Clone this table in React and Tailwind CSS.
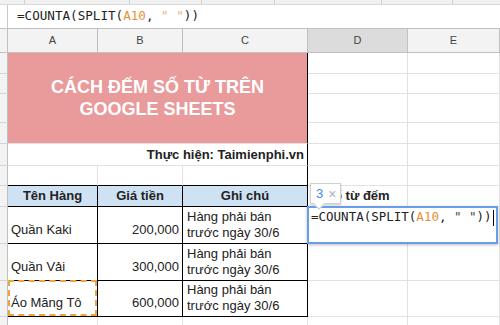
import React from 'react';

const mono = { fontFamily: '"DejaVu Sans Mono", "Liberation Mono", monospace' };

const grid = 'border-r border-b border-[#e2e2e2]';
const rowHead = 'bg-[#f3f3f3] border-r border-b border-r-[#c0c0c0] border-b-[#d4d4d4]';

const Formula = ({ quote = 'text-[#e9b27a]' }) => (
    <>
        =COUNTA(SPLIT(<span className="text-[#e69138]">A10</span>, <span className={quote}>" "</span>))
    </>
);

const ColHead = ({ label, active }) => (
    <div
        className={`flex items-center justify-center border-r border-b border-[#c0c0c0] text-[11px] text-[#444] ${
            active ? 'bg-[#dcdcdc]' : 'bg-[#f3f3f3]'
        }`}
    >
        {label}
    </div>
);

const DataRow = ({ name, price, dashed }) => (
    <>
        <div className={rowHead} />
        <div className="relative flex items-end px-[3px] pb-[4px] border-r border-b border-black">
            {name}
            {dashed && (
                <div className="absolute inset-0 -top-px border-2 border-dashed border-[#f1a43c]" />
            )}
        </div>
        <div className="flex items-end justify-end px-[3px] pb-[4px] border-r border-b border-black">
            {price}
        </div>
        <div className="flex flex-col justify-end px-[4px] pb-[2px] leading-[16px] border-r border-b border-black">
            <span>Hàng phải bán</span>
            <span>trước ngày 30/6</span>
        </div>
        <div className={grid} />
        <div className={grid} />
    </>
);

const App = () => {
    return (
        <div
            className="relative w-[500px] h-[325px] overflow-hidden bg-white text-[13px] text-[#222]"
            style={{ fontFamily: '"Liberation Sans", Arial, sans-serif' }}
        >
            {/* Toolbar remnant */}
            <div className="flex h-[5px] bg-[#f1f1f1] border-b border-[#dadada]">
                <div className="w-[25px] border-r border-[#d0d0d0]" />
                <div className="w-[105px] border-r border-[#d0d0d0]" />
                <div className="w-[72px] border-r border-[#d0d0d0]" />
                <div className="w-[73px] border-r border-[#d0d0d0]" />
                <div className="w-[107px] border-r border-[#d0d0d0]" />
                <div className="w-[71px] border-r border-[#d0d0d0]" />
            </div>

            {/* Formula bar */}
            <div className="flex h-[24px] border-b border-[#c0c0c0]">
                <div className="w-[8px] border-r border-[#c8c8c8]" />
                <div className="flex items-center pl-[9px] text-[12.6px] text-[#222]" style={mono}>
                    <span className="whitespace-pre">
                        <Formula />
                    </span>
                </div>
            </div>

            {/* Sheet grid */}
            <div className="grid grid-cols-[8px_90px_85px_125px_100px_92px] grid-rows-[24px_21px_20px_29px_21px_22px_20px_21px_37px_37px_36px_20px]">
                {/* Column headers */}
                <div className="bg-[#f3f3f3] border-r border-b border-[#c0c0c0]" />
                <ColHead label="A" />
                <ColHead label="B" />
                <ColHead label="C" />
                <ColHead label="D" active />
                <ColHead label="E" />

                {/* Title rows */}
                <div className={rowHead} />
                <div className="col-span-3 row-span-4 flex items-center justify-center bg-[#e99a9b] border-r border-b border-r-black border-b-[#e2e2e2] text-center text-[18px] leading-[22px] font-bold text-white">
                    CÁCH ĐẾM SỐ TỪ TRÊN
                    <br />
                    GOOGLE SHEETS
                </div>
                <div className={grid} />
                <div className={grid} />

                <div className={rowHead} />
                <div className={grid} />
                <div className={grid} />

                <div className={rowHead} />
                <div className={grid} />
                <div className={grid} />

                <div className={rowHead} />
                <div className={grid} />
                <div className={grid} />

                {/* Author row */}
                <div className={rowHead} />
                <div className="col-span-3 flex items-center justify-end pr-[3px] font-bold border-r border-b border-r-black border-b-[#e2e2e2]">
                    Thực hiện: Taimienphi.vn
                </div>
                <div className={grid} />
                <div className={grid} />

                {/* Empty row */}
                <div className={rowHead} />
                <div className="border-r border-b border-r-[#e2e2e2] border-b-black" />
                <div className="border-r border-b border-r-[#e2e2e2] border-b-black" />
                <div className="border-r border-b border-black" />
                <div className={grid} />
                <div className={grid} />

                {/* Table header */}
                <div className={rowHead} />
                <div className="flex items-center justify-center bg-[#cfe2f3] font-bold border-r border-b border-black">
                    Tên Hàng
                </div>
                <div className="flex items-center justify-center bg-[#cfe2f3] font-bold border-r border-b border-black">
                    Giá tiền
                </div>
                <div className="flex items-center justify-center bg-[#cfe2f3] font-bold border-r border-b border-black">
                    Ghi chú
                </div>
                <div className={`${grid} flex items-center justify-center font-bold`}>Số từ đếm</div>
                <div className={grid} />

                <DataRow name="Quần Kaki" price="200,000" />
                <DataRow name="Quần Vải" price="300,000" />
                <DataRow name="Áo Măng Tô" price="600,000" dashed />

                {/* Trailing row */}
                <div className={rowHead} />
                <div className={grid} />
                <div className={grid} />
                <div className={grid} />
                <div className={grid} />
                <div className={grid} />
            </div>

            {/* In-cell formula editor */}
            <div className="absolute left-[307px] top-[206px] w-[191px] h-[38px] border-2 border-[#6a9cec] bg-white shadow-[0_1px_3px_rgba(0,0,0,0.25)]">
                <div className="flex items-center pl-[2px] pt-[1px] h-[18px] text-[12.5px] text-[#222]" style={mono}>
                    <span className="whitespace-pre">
                        <Formula quote="text-[#444]" />
                    </span>
                    <span className="ml-px w-px h-[16px] bg-black" />
                </div>
            </div>

            {/* Result tooltip */}
            <div className="absolute left-[310px] top-[183px] w-[31px] h-[21px] flex items-center gap-[5px] pl-[5px] bg-white border border-[#d0d0d0] shadow-[0_1px_2px_rgba(0,0,0,0.2)]">
                <span className="text-[13px] text-[#4a86e8]">3</span>
                <span className="text-[14px] leading-none text-[#b0b0b0]">×</span>
                <div className="absolute left-[4px] -bottom-[5px] w-[8px] h-[8px] rotate-45 bg-white border-r border-b border-[#d0d0d0]" />
            </div>
        </div>
    );
};

export default App;
